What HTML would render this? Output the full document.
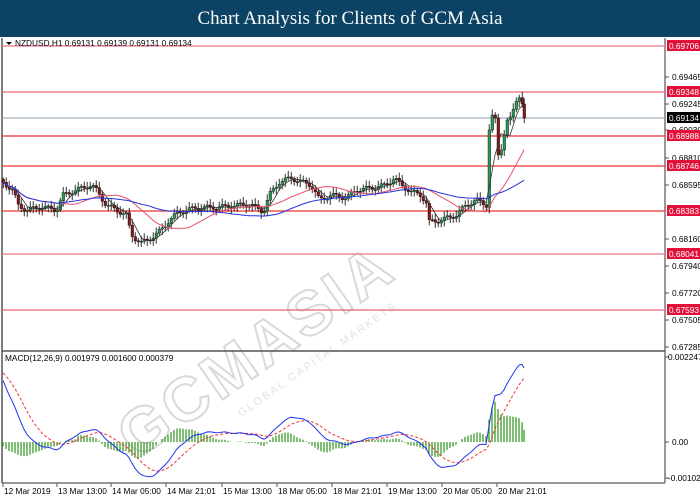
<!DOCTYPE html>
<html><head><meta charset="utf-8"><style>
body{margin:0;width:700px;height:500px;background:#fff;overflow:hidden;font-family:"Liberation Sans",sans-serif;}
#t{position:absolute;left:0;top:0;width:700px;height:37px;background:#0c4364;color:#fff;font-family:"Liberation Serif",serif;font-size:19px;text-align:center;line-height:37px;}
svg{position:absolute;left:0;top:0}
</style></head><body>
<div id="t">Chart Analysis for Clients of GCM Asia</div>
<svg id="s" width="700" height="500" font-family="Liberation Sans, sans-serif" font-size="8.3"></svg>
<script>
const S=document.getElementById('s');let h='';
function L(x1,y1,x2,y2,c,w,d){h+=`<line x1="${x1}" y1="${y1}" x2="${x2}" y2="${y2}" stroke="${c}" stroke-width="${w||1}" ${d?'stroke-dasharray="'+d+'"':''}/>`}
function T(x,y,s,c,a){h+=`<text x="${x}" y="${y}" fill="${c||'#000'}" ${a||''}>${s}</text>`}
h+=`<g transform="translate(330,300) rotate(-35)" opacity="0.55"><text x="-250" y="20" font-size="62" font-weight="bold" fill="none" stroke="#bbb" stroke-width="2" letter-spacing="4">GCMASIA</text><text x="-140" y="45" font-size="11" fill="#ccc" letter-spacing="2">GLOBAL CAPITAL MARKETS</text></g>`;
L(2,38,2,483,'#555',1.5);L(665,38,665,483,'#777',1.5);L(2,351,665,351,'#555',1.5);L(2,483,665,483,'#777',1.5);
const HL=[[46,'0.69706','#e8778a'],[92,'0.69348','#e8607a'],[136,'0.68988','#e33'],[166,'0.68746','#e33'],[211,'0.68383','#e33'],[254,'0.68041','#e8778a'],[310,'0.67593','#e8607a']];
L(2,118,665,118,'#8a9aaa',1);
HL.forEach(a=>L(2,a[0],665,a[0],a[2],1.2));
[[77,'0.69465'],[104,'0.69245'],[130,'0.69030'],[158,'0.68810'],[185,'0.68595'],[239,'0.68160'],[266,'0.67940'],[293,'0.67720'],[320,'0.67505'],[347,'0.67285']].forEach(a=>{L(665,a[0],669,a[0],'#555');T(672,a[0]+3,a[1])});
HL.forEach(a=>{h+=`<rect x="667" y="${a[0]-6}" width="33" height="11" fill="#e0103a"/>`;T(669,a[0]+3,a[1],'#fff')});
h+=`<rect x="667" y="112" width="33" height="11" fill="#000"/>`;T(669,121,'0.69134','#fff');
L(665,357,669,357,'#555');T(668,360,'0.002247');L(665,442,669,442,'#555');T(672,445,'0.00');L(665,478,669,478,'#555');T(668,481,'-0.00102');
[['12 Mar 2019',4],['13 Mar 13:00',58],['14 Mar 05:00',112],['14 Mar 21:01',167],['15 Mar 13:00',223],['18 Mar 05:00',278],['18 Mar 21:01',333],['19 Mar 13:00',388],['20 Mar 05:00',443],['20 Mar 21:01',498]].forEach(a=>{L(a[1]-1,483,a[1]-1,487,'#555');T(a[1],494,a[0])});
T(15,46,'NZDUSD,H1  0.69131 0.69139 0.69131 0.69134');h+=`<path d="M6 42h6l-3 3z" fill="#000"/>`;
T(5,361,'MACD(12,26,9) 0.001979 0.001600 0.000379');
const W=[[2,183],[12,190],[16,205],[25,210],[40,207],[55,210],[62,195],[75,190],[90,185],[95,190],[105,205],[125,215],[130,235],[140,243],[150,238],[160,230],[168,220],[178,212],[195,208],[220,207],[240,205],[250,205],[262,212],[268,195],[278,182],[290,178],[300,182],[310,185],[318,200],[330,195],[345,198],[355,190],[370,188],[385,185],[393,178],[400,185],[410,192],[420,195],[426,205],[428,222],[440,220],[455,215],[465,205],[475,200],[485,205],[488,130],[491,115],[494,118],[497,155],[500,150],[503,135],[507,115],[510,118],[513,105],[517,98],[520,97],[523,118]];
let X=[],C=[];
for(let x=2;x<=523;x+=3){let i=0;while(i<W.length-2&&W[i+1][0]<x)i++;const a=W[i],b=W[i+1];let t=(x-a[0])/(b[0]-a[0]);t=Math.max(0,Math.min(1,t));X.push(x);C.push(a[1]+(b[1]-a[1])*t+(x>485?0:Math.sin(x*1.7)*2.5));}
X.push(523);C.push(118);
for(let i=0;i<C.length;i++){const c=C[i],op=i?C[i-1]:C[0]-3;const top=Math.min(op,c),bot=Math.max(op,c);const hi=top-2-Math.abs(Math.sin(i*2.3))*4,lo=bot+2+Math.abs(Math.cos(i*1.9))*4;L(X[i]+1.2,hi,X[i]+1.2,lo,'#000',0.8);h+=`<rect x="${X[i]}" y="${top}" width="2.6" height="${Math.max(1,bot-top)}" fill="${c<op?'#2a9a55':'#8b1a1a'}" stroke="#000" stroke-width="0.4"/>`;}
function sma(n){return C.map((v,i)=>{let s=0,k=0;for(let j=Math.max(0,i-n+1);j<=i;j++){s+=C[j];k++}return s/k})}
function pl(arr,c,w,d){let p=arr.map((v,i)=>(X[i]+1)+','+v.toFixed(1)).join(' ');h+=`<polyline points="${p}" fill="none" stroke="${c}" stroke-width="${w}" ${d?'stroke-dasharray="'+d+'"':''}/>`}
pl(sma(5),'#333',0.8);pl(sma(20),'#e8506a',1);pl(sma(50),'#2233dd',1);
function ema(a,n,e){const k=2/(n+1);let r=[];a.forEach(v=>{e=v*k+e*(1-k);r.push(e)});return r}
const P=C.map(v=>-v),e12=ema(P,12,P[0]+9),e26=ema(P,26,P[0]-14),M=e12.map((v,i)=>v-e26[i]);
const Sg=ema(M,9,M[0]+3);
const f=3;
M.forEach((v,i)=>{let d=(v-Sg[i])*f*1.2;if(i<25)d*=0.5;L(X[i]+1,442,X[i]+1,442-d,'#3a9a2a',1.3)});
pl(Sg.map(v=>442-v*f),'#e33',1,'3,2');pl(M.map(v=>442-v*f),'#2233ee',1);
S.innerHTML=h;
</script>
</body></html>
